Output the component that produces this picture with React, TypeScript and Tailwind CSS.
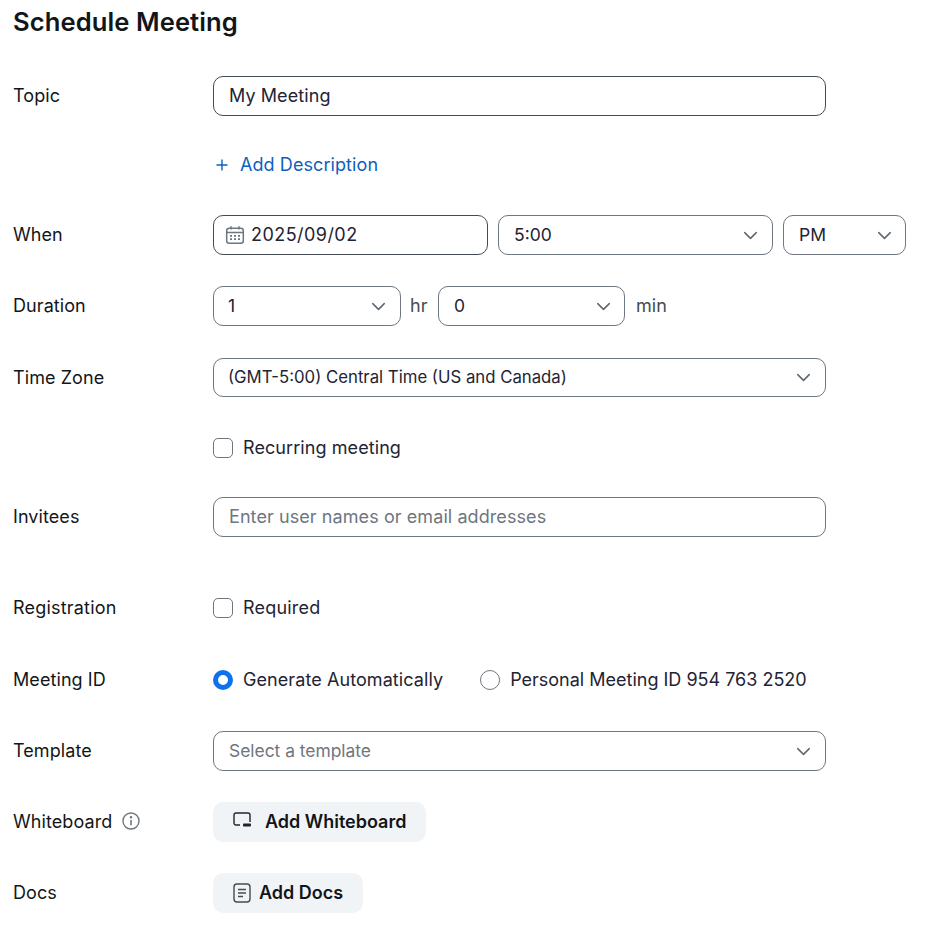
import type { ReactNode } from 'react';
import { ChevronDown } from 'lucide-react';

function Row({ label, extra, className, children }: { label: string; extra?: ReactNode; className: string; children: ReactNode }) {
  return (
    <div className={`flex items-center ${className}`}>
      <div className="w-[200px] shrink-0 flex items-center gap-[10px] text-[#131619]">
        <span>{label}</span>
        {extra}
      </div>
      {children}
    </div>
  );
}

function Select({ value, className, textClass }: { value: string; className: string; textClass: string }) {
  return (
    <div className={`shrink-0 flex items-center justify-between rounded-[10px] border border-[#6e7680] pl-[14px] ${className}`}>
      <span className={`tracking-normal ${textClass}`}>{value}</span>
      <ChevronDown size={23} strokeWidth={1.5} className="text-[#5d656e]" />
    </div>
  );
}

function Checkbox({ label }: { label: string }) {
  return (
    <label className="flex items-center gap-[10px] text-[#232333]">
      <span className="w-5 h-5 rounded-[5px] border border-[#6e7680] bg-white" />
      {label}
    </label>
  );
}

export default function App() {
  return (
    <div className="w-[928px] h-[936px] bg-white overflow-hidden pl-[13px] text-[18px] leading-6 tracking-[0.08px] text-[#232333] font-['Inter',sans-serif]">
      <h1 className="text-[25.6px] leading-7 font-semibold text-[#131619] mt-2">Schedule Meeting</h1>

      <Row label="Topic" className="mt-[40px] h-10">
        <div className="w-[613px] h-10 flex items-center rounded-[10px] border border-[#444b53] px-[15px]">My Meeting</div>
      </Row>

      <div className="flex items-center h-6 mt-[37px] ml-[200px] text-[#0e5fc0]">
        <svg width="18" height="18" viewBox="0 0 18 18" fill="none" stroke="currentColor" strokeWidth="1.4" className="mr-[9px]">
          <path d="M9 3.5v11M3.5 9h11" />
        </svg>
        Add Description
      </div>

      <Row label="When" className="mt-[38px] h-10">
        <div className="flex gap-[10px]">
          <div className="w-[275px] h-10 flex items-center gap-[6px] rounded-[10px] border border-[#444b53] pl-[11px]">
            <svg width="20" height="20" viewBox="0 0 20 20" fill="none" stroke="#6e7680" strokeWidth="1.5">
              <rect x="1.7" y="3.2" width="16.6" height="15" rx="2.5" />
              <path d="M1.7 7.5h16.6M6 1.2v3.4M14 1.2v3.4" />
              <path d="M5 10.8h2M9 10.8h2M13 10.8h2M5 14.2h2M9 14.2h2M13 14.2h2" strokeWidth="1.8" />
            </svg>
            <span className="tracking-[0.45px]">2025/09/02</span>
          </div>
          <Select value="5:00" textClass="text-[17.5px] pl-px" className="w-[275px] h-10 pr-[10px]" />
          <Select value="PM" textClass="text-[17.5px] pl-px" className="w-[123px] h-10 pr-[9px]" />
        </div>
      </Row>

      <Row label="Duration" className="mt-[31px] h-10">
        <Select value="1" textClass="text-[17.5px]" className="w-[188px] h-10 pr-[10px]" />
        <span className="ml-[9px] w-[28px] text-[#444b53]">hr</span>
        <Select value="0" textClass="text-[17.5px] pl-px" className="w-[187px] h-10 pr-[9px]" />
        <span className="ml-[11px] text-[#444b53]">min</span>
      </Row>

      <Row label="Time Zone" className="mt-[32px] h-[39px]">
        <Select value="(GMT-5:00) Central Time (US and Canada)" textClass="text-[16.75px] -translate-y-px" className="w-[613px] h-[39px] pr-[10px]" />
      </Row>

      <div className="h-6 mt-[39px] ml-[200px] flex items-center">
        <Checkbox label="Recurring meeting" />
      </div>

      <Row label="Invitees" className="mt-[37px] h-10">
        <div className="w-[613px] h-10 flex items-center rounded-[10px] border border-[#6e7680] px-[15px] text-[#6e7680]">
          Enter user names or email addresses
        </div>
      </Row>

      <Row label="Registration" className="mt-[51px] h-10 tracking-[0.2px]">
        <Checkbox label="Required" />
      </Row>

      <Row label="Meeting ID" className="mt-[32px] h-10">
        <div className="flex items-center">
          <span className="w-5 h-5 rounded-full border-[5px] border-[#0e72ed] bg-white mr-[10px]" />
          <span className="mr-[37px]">Generate Automatically</span>
          <span className="w-5 h-5 rounded-full border border-[#6e7680] bg-white mr-[10px]" />
          <span className="tracking-normal">Personal Meeting ID 954 763 2520</span>
        </div>
      </Row>

      <Row label="Template" className="mt-[31px] h-10">
        <Select value="Select a template" textClass="text-[17.4px] text-[#6e7680] pl-px" className="w-[613px] h-10 pr-[10px]" />
      </Row>

      <Row
        label="Whiteboard"
        className="mt-[31px] h-10"
        extra={
          <svg width="18" height="18" viewBox="0 0 18 18" fill="none" stroke="#6e7680" strokeWidth="1.4" className="-mt-[2px]">
            <circle cx="9" cy="9" r="8" />
            <path d="M9 8v5.2" strokeWidth="1.6" />
            <circle cx="9" cy="5.3" r="0.6" fill="#6e7680" />
          </svg>
        }
      >
        <button className="h-10 w-[213px] flex items-center rounded-[10px] bg-[#f1f4f6] pl-5 font-semibold tracking-normal text-[#131619]">
          <svg width="18" height="16" viewBox="0 0 18 16" fill="none" className="mr-[14px] -mt-1">
            <path d="M7 13H3a2 2 0 0 1-2-2V3a2 2 0 0 1 2-2h12a2 2 0 0 1 2 2v7" stroke="#232333" strokeWidth="1.4" />
            <rect x="10" y="11.5" width="8" height="3" rx="0.8" fill="#232333" />
          </svg>
          Add Whiteboard
        </button>
      </Row>

      <Row label="Docs" className="mt-[31px] h-10">
        <button className="h-10 w-[150px] flex items-center rounded-[10px] bg-[#f1f4f6] pl-5 font-semibold tracking-normal text-[#131619]">
          <svg width="18" height="20" viewBox="0 0 18 20" fill="none" stroke="#444b53" strokeWidth="1.4" className="mr-[8px]">
            <rect x="1" y="1" width="16" height="18" rx="3" />
            <path d="M5 6.5h8M5 10h8M5 13.5h5" />
          </svg>
          Add Docs
        </button>
      </Row>
    </div>
  );
}
